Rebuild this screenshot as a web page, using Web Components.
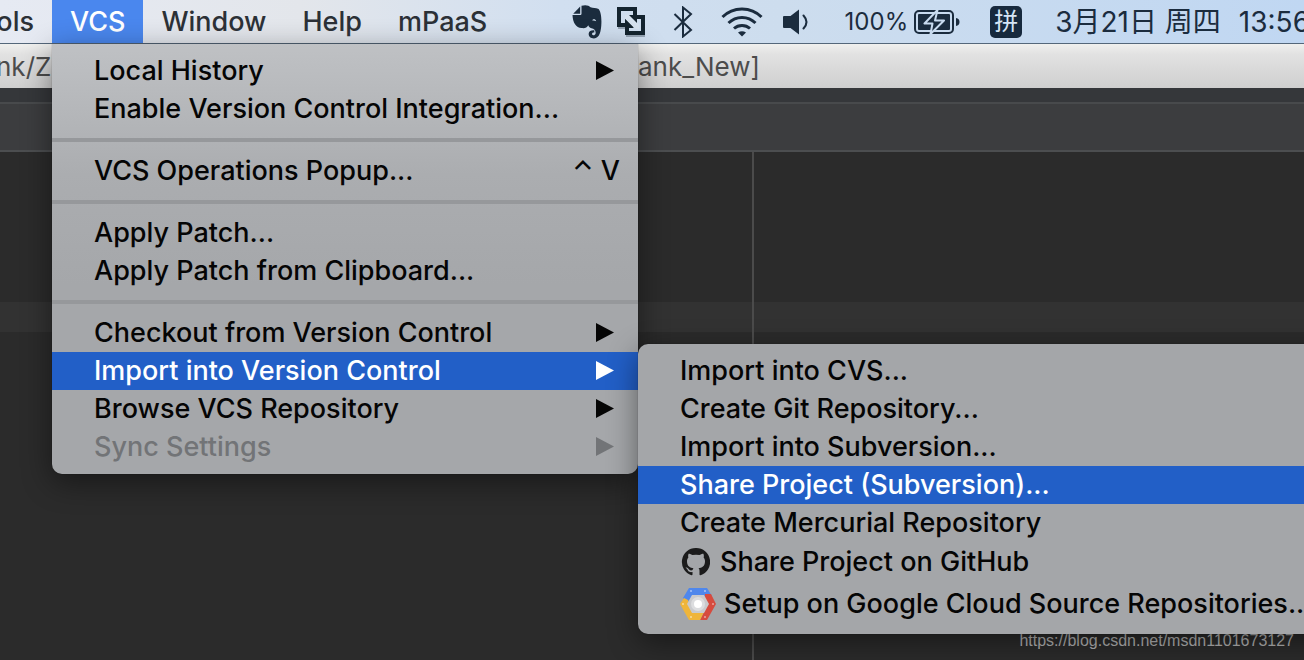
<!DOCTYPE html>
<html lang="zh-CN">
<head>
<meta charset="utf-8">
<title>VCS menu</title>
<style>
  html, body {
    margin: 0;
    height: 100%;
    overflow: hidden;
  }

  body {
    background: #2b2b2b;
    font-family: Inter, "Noto Sans CJK SC", sans-serif;
    font-size: 27px;
    font-weight: 450;
  }
</style>
</head>
<body>
<desktop-screen>
  <menu-bar slot="bar">
    <menu-title cut>Tools</menu-title>
    <menu-title open>VCS
      <drop-menu slot="menu">
        <menu-item arrow>Local History</menu-item>
        <menu-item>Enable Version Control Integration...</menu-item>
        <menu-line></menu-line>
        <menu-item shortcut="⌃ V">VCS Operations Popup...</menu-item>
        <menu-line></menu-line>
        <menu-item>Apply Patch...</menu-item>
        <menu-item>Apply Patch from Clipboard...</menu-item>
        <menu-line></menu-line>
        <menu-item arrow>Checkout from Version Control</menu-item>
        <menu-item arrow selected>Import into Version Control
          <drop-menu slot="submenu" sub>
            <menu-item>Import into CVS...</menu-item>
            <menu-item>Create Git Repository...</menu-item>
            <menu-item>Import into Subversion...</menu-item>
            <menu-item selected>Share Project (Subversion)...</menu-item>
            <menu-item>Create Mercurial Repository</menu-item>
            <menu-item class="github"><glyph-icon slot="icon" name="github"></glyph-icon>Share Project on GitHub</menu-item>
            <menu-item class="cloud"><glyph-icon slot="icon" name="cloud"></glyph-icon>Setup on Google Cloud Source Repositories...</menu-item>
          </drop-menu>
        </menu-item>
        <menu-item arrow>Browse VCS Repository</menu-item>
        <menu-item arrow disabled>Sync Settings</menu-item>
      </drop-menu>
    </menu-title>
    <menu-title>Window</menu-title>
    <menu-title>Help</menu-title>
    <menu-title>mPaaS</menu-title>
    <status-area slot="status"></status-area>
  </menu-bar>
  <ide-window>
    <span slot="path">nk/Z</span>
    <span slot="project">ank_New]</span>
  </ide-window>
  <a slot="credit" href="https://blog.csdn.net/msdn1101673127">https://blog.csdn.net/msdn1101673127</a>
</desktop-screen>

<script>
const icons = {
  evernote: [30, 34, `
    <path fill="currentColor" d="M9.500 .8C13-.4 17 .2 18.500 2.200 21 2.800 24 3 26 3.700 28.600 4.800 29.600 12 29.400 18 29.200 26 27.500 33.400 22 33.400 18.500 33.400 16.400 31.300 16.700 28.500 17 26 19.300 25 22.300 25.300V27.600C20.800 27.500 19.900 28.100 20.100 29.200 20.500 30.900 23.200 30.700 23.600 28.500 24 25.500 22.300 23.700 19.500 23.200 17.500 22.700 16.700 21.600 16.300 20.300 15 23 12.500 23.400 9.500 23 4 22.500.8 18 .5 10H7.800C9 10 9.500 9.400 9.500 8.400Z"/>
    <path fill="currentColor" d="M1.200 8.800 8.200 1.600V8.800Z"/>
    <path fill="#cfddec" d="M20.300 15.500C20.600 13.600 23.700 13.600 24.200 16.200 23 15.400 21.800 15.300 20.300 15.500Z"/>`],
  link: [28, 30, `
    <path fill="none" stroke="#6d7c8b" stroke-opacity=".6" stroke-width="2" d="M1 21H8M9 29H28"/>
    <rect x="2" y="2" width="16" height="16" fill="none" stroke="#14242f" stroke-width="4"/>
    <rect x="10" y="10" width="16" height="16" fill="none" stroke="#14242f" stroke-width="4"/>
    <path fill="#d6e2ef" d="M8 8H12L22 18V22H18L8 12Z"/>
    <path fill="#14242f" d="M8 12 17 21H8ZM13 8H20V15Z"/>`],
  bluetooth: [20, 32, `
    <path fill="none" stroke="currentColor" stroke-width="2" d="M1.500 8 18 24 10 30.500V1.500L18 8 1.500 24"/>`],
  wifi: [42, 30, `
    <g fill="none" stroke="currentColor" stroke-width="3">
      <path d="M1.500 10C12-.8 30-.8 40.500 10"/>
      <path d="M7.500 16C15 8.500 27 8.500 34.500 16"/>
      <path d="M13 21.500C17.500 17.500 24.500 17.500 29 21.500"/>
    </g>
    <path fill="currentColor" d="M17 25.500Q21 22.800 25 25.500L21 29.500Z"/>`],
  sound: [26, 26, `
    <path fill="currentColor" d="M0 8Q0 7 1 7H7.500L16 .5V25.500L7.500 19H1Q0 19 0 18Z"/>
    <path fill="none" stroke="currentColor" stroke-width="2" stroke-linecap="round" d="M20.500 6.500Q26.500 13 20.500 19.500"/>`],
  battery: [46, 26, `
    <rect x="1" y="2" width="38" height="22" rx="4" fill="none" stroke="currentColor" stroke-width="2"/>
    <rect x="4" y="5" width="32" height="16" rx="1" fill="currentColor"/>
    <path fill="currentColor" d="M42 9Q45.500 9.500 45.500 13T42 17Z"/>
    <path fill="currentColor" stroke="#c9dbef" stroke-width="2" stroke-linejoin="round" d="M23.500 1 10.500 14.500H18.500L16.500 25 30 11.500H21Z"/>`],
  github: [30, 28, `
    <path transform="translate(2)" fill="#1b1b1b" fill-rule="evenodd" d="M14 0A14 14 0 0 0 9.500 27.300C10.200 27.400 10.500 27 10.500 26.600V24C6.700 24.800 5.800 22.300 5.800 22.300 5.200 20.700 4.300 20.300 4.300 20.300 3 19.400 4.400 19.400 4.400 19.400 5.800 19.500 6.500 20.800 6.500 20.800 7.800 23 9.800 22.400 10.600 22 10.700 21.100 11.100 20.500 11.500 20.200 8.300 19.900 5 18.600 5 13.300 5 11.700 5.500 10.500 6.400 9.500 6.200 9.100 5.800 7.700 6.600 5.700 6.600 5.700 7.800 5.300 10.500 7.100A13.500 13.500 0 0 1 17.500 7.100C20.200 5.300 21.400 5.700 21.400 5.700 22.200 7.700 21.800 9.100 21.600 9.500 22.500 10.500 23 11.700 23 13.300 23 18.600 19.700 19.900 16.500 20.200 17.200 20.600 17.500 21.500 17.500 22.800V26.600C17.500 27 17.800 27.400 18.500 27.300A14 14 0 0 0 14 0Z"/>`],
  cloud: [36, 32, `
    <path fill="#4f87ec" d="M9 0H27L32 8 26 12H12L7 16 3 10Z"/>
    <path fill="#d64b3e" d="M25 6H31L36 16 27 32H20L25 22Z"/>
    <path fill="#efb53a" d="M4 10 0 16 9 32H20L24 24H14L8 12Z"/>
    <path fill="#c9cacd" d="M12 7H24L29 16 24 25H12L7 16Z"/>
    <circle cx="18" cy="16" r="7" fill="#dcdddf"/>
    <circle cx="18" cy="16" r="4" fill="#fff"/>
    <g fill="#fff" fill-opacity=".5"><circle cx="11" cy="3" r="1"/><circle cx="25" cy="3" r="1"/><circle cx="33" cy="16" r="1"/><circle cx="3" cy="16" r="1"/><circle cx="11" cy="29" r="1"/><circle cx="25" cy="29" r="1"/></g>`]
};

class GlyphIcon extends HTMLElement {
  constructor() {
    super();
    this.attachShadow({ mode: 'open' });
  }

  connectedCallback() {
    const [width, height, shapes] = icons[this.getAttribute('name')];
    this.shadowRoot.innerHTML = `
      <style>
        :host { display: block; flex: none; }
        svg { display: block; }
      </style>
      <svg width="${width}" height="${height}" viewBox="0 0 ${width} ${height}" aria-hidden="true">${shapes}</svg>
    `;
  }
}

// Base for elements whose shadow tree is a plain copy of their markup.
class TemplateElement extends HTMLElement {
  constructor() {
    super();
    const template = document.createElement('template');
    template.innerHTML = this.constructor.markup;
    this.attachShadow({ mode: 'open' });
    this.shadowRoot.appendChild(template.content.cloneNode(true));
  }
}

class DesktopScreen extends TemplateElement {
  static get markup() {
    return `
      <style>
        :host {
          display: flex;
          flex-direction: column;
          position: relative;
          height: 100vh;
          overflow: hidden;
        }

        ::slotted(a) {
          position: absolute;
          right: 10px;
          bottom: 9px;
          font: 16px/20px "Liberation Sans", sans-serif;
          color: #b4b4b4;
          text-decoration: none;
        }
      </style>
      <slot name="bar"></slot>
      <slot></slot>
      <slot name="credit"></slot>
    `;
  }
}

class MenuBar extends TemplateElement {
  static get markup() {
    return `
      <style>
        :host {
          display: flex;
          flex: none;
          position: relative;
          z-index: 2;
          height: 43px;
          border-bottom: 1px solid #54677a;
          background: linear-gradient(90deg, #e6eaf3, #e3e6eb 300px, #d1dff0 560px, #cdddee 780px, #c0d7f2);
          color: #2b3036;
        }

        nav {
          display: flex;
        }
      </style>
      <nav><slot></slot></nav>
      <slot name="status"></slot>
    `;
  }
}

class MenuTitle extends TemplateElement {
  static get markup() {
    return `
      <style>
        :host {
          display: block;
          position: relative;
        }

        :host([cut]) {
          display: flex;
          justify-content: flex-end;
          width: 52px;
          overflow: hidden;
        }

        button {
          height: 100%;
          padding: 0 18px;
          border: none;
          background: none;
          color: inherit;
          font: inherit;
          line-height: 43px;
        }

        :host([open]) button {
          background: #4a87ee;
          color: #fff;
        }

        ::slotted(drop-menu) {
          position: absolute;
          top: 44px;
          left: 0;
          min-width: 586px;
        }
      </style>
      <button type="button"><slot></slot></button>
      <slot name="menu"></slot>
    `;
  }
}

class DropMenu extends TemplateElement {
  static get markup() {
    return `
      <style>
        :host {
          display: block;
          box-sizing: border-box;
          padding: 8px 0;
          border-radius: 0 0 10px 10px;
          background: linear-gradient(#bfc1c4, #abadb0 130px, #a5a7aa 240px);
          box-shadow: 0 8px 30px rgba(0, 0, 0, .45), 0 0 1px rgba(0, 0, 0, .6);
          color: #050505;
          white-space: nowrap;
        }

        :host([sub]) {
          border-radius: 10px;
          background: #a4a6a9;
        }
      </style>
      <div role="menu"><slot></slot></div>
    `;
  }
}

class MenuItem extends TemplateElement {
  static get markup() {
    return `
      <style>
        :host {
          --row: 38px;
          display: block;
          position: relative;
        }

        :host(.github) { --row: 40px; }
        :host(.cloud) { --row: 44px; }

        button {
          display: flex;
          align-items: center;
          gap: 10px;
          width: 100%;
          height: var(--row);
          padding: 0 24px 0 42px;
          border: none;
          background: none;
          color: #050505;
          font: inherit;
          line-height: 38px;
          text-align: left;
          white-space: nowrap;
        }

        :host(.cloud) button { gap: 8px; }

        .label { flex: 1; }

        :host([selected]) > button {
          background: #225fc7;
          color: #fff;
        }

        :host([disabled]) > button { color: #727477; }

        .arrow {
          display: none;
          width: 18px;
          height: 20px;
        }

        :host([arrow]) .arrow { display: block; }

        kbd {
          font: inherit;
        }

        kbd:empty { display: none; }

        :host([shortcut]) > button { padding-right: 18px; }

        ::slotted(drop-menu) {
          position: absolute;
          top: -8px;
          left: 100%;
          min-width: 680px;
        }
      </style>
      <button type="button" role="menuitem">
        <slot name="icon"></slot>
        <span class="label"><slot></slot></span>
        <kbd></kbd>
        <svg class="arrow" viewBox="0 0 18 20" aria-hidden="true"><path fill="currentColor" d="M0 0 18 9.500 0 19Z"/></svg>
      </button>
      <slot name="submenu"></slot>
    `;
  }

  connectedCallback() {
    this.shadowRoot.querySelector('kbd').textContent = this.getAttribute('shortcut') || '';
    this.shadowRoot.querySelector('button').disabled = this.hasAttribute('disabled');
  }
}

class MenuLine extends TemplateElement {
  static get markup() {
    return `
      <style>
        :host { display: block; padding: 10px 0; }
        hr { margin: 0; height: 4px; border: none; background: #96989b; }
      </style>
      <hr>
    `;
  }
}

class StatusArea extends TemplateElement {
  static get markup() {
    return `
      <style>
        :host {
          display: flex;
          align-items: center;
          margin: 0 -6px 0 auto;
          color: #1b2c3e;
          font-weight: 400;
          line-height: 44px;
          white-space: nowrap;
        }

        .icons {
          display: flex;
          align-items: center;
          gap: 28px;
          margin-right: 36px;
        }

        .apps {
          display: flex;
          align-items: center;
          gap: 15px;
        }

        .sound {
          display: flex;
          align-items: center;
          gap: 20px;
        }

        .power {
          display: flex;
          align-items: center;
          gap: 6px;
          margin-right: 30px;
          font-size: 24px;
        }

        .input {
          width: 32px;
          height: 32px;
          margin-right: 33px;
          border-radius: 5px;
          background: #17293d;
          color: #d5e4f5;
          font-size: 24px;
          line-height: 31px;
          text-align: center;
        }

        time {
          display: flex;
          gap: 18px;
          font-size: 28px;
        }
      </style>
      <div class="icons">
        <div class="apps">
          <glyph-icon name="evernote"></glyph-icon>
          <glyph-icon name="link"></glyph-icon>
        </div>
        <glyph-icon name="bluetooth"></glyph-icon>
        <div class="sound">
          <glyph-icon name="wifi"></glyph-icon>
          <glyph-icon name="sound"></glyph-icon>
        </div>
      </div>
      <div class="power">100%<glyph-icon name="battery"></glyph-icon></div>
      <div class="input">拼</div>
      <time><span>3月21日 周四</span><span>13:56</span></time>
    `;
  }
}

class IdeWindow extends TemplateElement {
  static get markup() {
    return `
      <style>
        :host {
          display: flex;
          flex: 1;
          flex-direction: column;
        }

        header {
          display: grid;
          grid-template-columns: 642px 1fr;
          height: 44px;
          margin-left: -4px;
          background: linear-gradient(#f0f0ee, #e2e2e2 10px, #cfcfcf);
          color: #4c4c4c;
          font-size: 26px;
          font-weight: 400;
          line-height: 46px;
          white-space: nowrap;
        }

        .tools {
          height: 14px;
          border-bottom: 2px solid #484a4c;
          background: #35373a;
        }

        .tabs {
          height: 46px;
          border-bottom: 2px solid #4c4e50;
          background: #3c3d3f;
        }

        .editor {
          display: grid;
          grid-template: 150px 30px 1fr / 754px 1fr;
          flex: 1;
        }

        .left { border-right: 2px solid #4b4b4b; }

        .caret { background: #323232; }
      </style>
      <header><slot name="path"></slot><slot name="project"></slot></header>
      <div class="tools"></div>
      <div class="tabs"></div>
      <div class="editor">
        <div class="left"></div><div></div>
        <div class="left caret"></div><div class="caret"></div>
        <div class="left"></div><div></div>
      </div>
    `;
  }
}

customElements.define('glyph-icon', GlyphIcon);
customElements.define('desktop-screen', DesktopScreen);
customElements.define('menu-bar', MenuBar);
customElements.define('menu-title', MenuTitle);
customElements.define('drop-menu', DropMenu);
customElements.define('menu-item', MenuItem);
customElements.define('menu-line', MenuLine);
customElements.define('status-area', StatusArea);
customElements.define('ide-window', IdeWindow);
</script>
</body>
</html>
